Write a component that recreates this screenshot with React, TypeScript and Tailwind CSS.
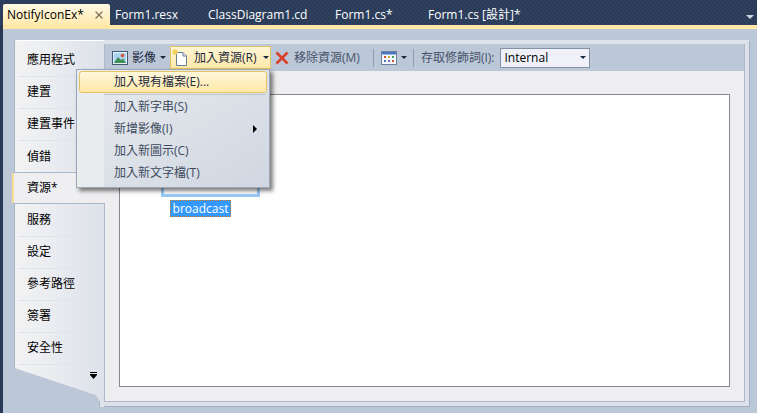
import React from 'react';
import { X } from 'lucide-react';

const CJK = "font-['Open_Sans','Noto_Sans_CJK_TC',sans-serif]";

const tabs = [
  { label: 'Form1.resx', w: 'w-[93px]' },
  { label: 'ClassDiagram1.cd', w: 'w-[127px]' },
  { label: 'Form1.cs*', w: 'w-[93px]' },
  { label: 'Form1.cs [設計]*', w: 'w-[130px]' },
];

const navItems = ['應用程式', '建置', '建置事件', '偵錯', '資源*', '服務', '設定', '參考路徑', '簽署', '安全性'];

function Caret({ className = '' }: { className?: string }) {
  return <span className={`inline-block w-0 h-0 border-x-[3px] border-x-transparent border-t-[3px] border-t-[#1b293e] ${className}`} />;
}

function ImageIcon() {
  return (
    <svg width="16" height="16" viewBox="0 0 16 16" className="shrink-0">
      <rect x="0.5" y="1.5" width="15" height="13" fill="#e6f2fa" stroke="#3f5a78" />
      <rect x="2" y="3" width="12" height="10" fill="#a9d3ee" />
      <path d="M2 13 L6 7 L9 10 L11 8.5 L14 13Z" fill="#3f8f52" />
      <circle cx="10.5" cy="5.5" r="1.8" fill="#d9553b" />
    </svg>
  );
}

function NewFileIcon() {
  return (
    <svg width="17" height="18" viewBox="0 0 17 18" className="shrink-0">
      <path d="M4.5 3.5 H11 L14.5 7 V16.5 H4.5Z" fill="#ffffff" stroke="#6b7d94" />
      <path d="M11 3.5 V7 H14.5" fill="#dfe7f0" stroke="#6b7d94" />
      <path d="M3 0 V6 M0 3 H6 M1 1 L5 5 M5 1 L1 5" stroke="#f2cf55" strokeWidth="1.1" />
    </svg>
  );
}

function RemoveIcon() {
  return (
    <svg width="14" height="14" viewBox="0 0 14 14" className="shrink-0">
      <path d="M1.5 1.5 L12.5 12.5 M12.5 1.5 L1.5 12.5" stroke="#d8402c" strokeWidth="2.6" />
    </svg>
  );
}

function GridIcon() {
  return (
    <svg width="16" height="14" viewBox="0 0 16 14" className="shrink-0">
      <rect x="0.5" y="0.5" width="15" height="13" fill="#f4f7fb" stroke="#6c7f9c" />
      <rect x="1" y="1" width="14" height="2.5" fill="#4a78c0" />
      <rect x="3" y="5" width="2" height="2" fill="#c9503e" />
      <rect x="7" y="5" width="2" height="2" fill="#e3a93c" />
      <rect x="11" y="5" width="2" height="2" fill="#4a9a55" />
      <rect x="3" y="9" width="2" height="2" fill="#4a78c0" />
      <rect x="7" y="9" width="2" height="2" fill="#8d5fb5" />
      <rect x="11" y="9" width="2" height="2" fill="#c9503e" />
    </svg>
  );
}

function NavList() {
  return (
    <div className="relative z-10 shrink-0 w-[92px] pl-[2px]">
      <div className="relative h-full pt-[4px] flex flex-col border-l border-l-[#a9b4c6] border-t border-t-white rounded-tl-[3px] bg-gradient-to-r from-[#f3f3f4] to-[#dde2ea] [clip-path:polygon(0_0,90px_0,90px_367px,85px_367px,85px_361px,81px_355px,0_328px)]">
        {navItems.map((item, i) => (
          <div
            key={item}
            className={
              item === '資源*'
                ? 'h-8'
                : `h-8 flex items-center pb-px pl-[9px] ml-[3px] mr-[9px] text-xs text-black ${i !== 3 ? 'border-b border-[#dfe3ea]' : ''}`
            }
          >
            {item === '資源*' ? '' : item}
          </div>
        ))}
        <div className="relative flex-1">
          <svg width="7" height="7" viewBox="0 0 7 7" className="absolute left-[75px] top-[7px]">
            <path d="M0 0 H7 V1 H0Z M0 2 H7 V3 H0Z M0 3 H7 L3.5 7Z" fill="#000000" />
          </svg>
        </div>
        <svg width="90" height="40" viewBox="0 0 90 40" className="absolute left-[-1px] top-[327px]">
          <path d="M0 1 L81 28 L85 34 V40" fill="none" stroke="#a9b4c6" strokeWidth="2" />
        </svg>
      </div>
      {/* selected page sticks out past the list on both sides */}
      <div className="absolute left-0 top-[132px] w-[93px] h-[32px] flex items-center pl-[13px] pb-px text-xs text-black bg-[#efeff1] border-y border-[#a9b6c8] border-l-2 border-l-[#f7dc98] rounded-l-[2px]">
        {navItems[4]}
      </div>
    </div>
  );
}

function Toolbar() {
  return (
    <div className="shrink-0 h-[27px] flex items-center pl-[7px] gap-[2px] bg-[#bcc7d8] text-xs text-[#1b293e]">
      <div className="flex items-center gap-[4px] h-[23px]">
        <ImageIcon />
        <span>影像</span>
        <Caret />
      </div>
      <div className="flex items-center h-[23px] w-[101px] ml-[2px] pl-[1px] bg-gradient-to-b from-[#fff6d6] to-[#ffe9a8] border border-[#e5c365]">
        <NewFileIcon />
        <span className="ml-[5px]">加入資源(R)</span>
        <Caret className="ml-[6px]" />
      </div>
      <div className="flex items-center gap-[5px] ml-[2px] h-[23px]">
        <RemoveIcon />
        <span className="text-[#45546a]">移除資源(M)</span>
      </div>
      <div className="w-px h-[18px] bg-[#8f9db2] ml-[11px] mr-[5px]" />
      <GridIcon />
      <Caret className="ml-[2px]" />
      <div className="w-px h-[18px] bg-[#8f9db2] ml-[4px] mr-[5px]" />
      <span className="text-[#45546a]">存取修飾詞(I):</span>
      <div className="ml-[4px] w-[90px] h-[20px] flex items-center justify-between px-[3px] bg-[#f0f1f8] border border-[#8492a6] text-black">
        <span>Internal</span>
        <Caret />
      </div>
    </div>
  );
}

function ResourceCanvas() {
  return (
    <div className="relative flex-1 mx-[14px] mt-[23px] mb-[14px] bg-white border border-[#88888e]">
      <div className="absolute left-[41px] top-[65px] w-[99px] h-[37px] border-x-[3px] border-b-[3px] border-[#99c9f5]" />
      <div className="absolute left-[50px] top-[105px] w-[61px] h-[17px] flex items-center justify-center bg-[#3399ff] border border-dotted border-[#d4792a] text-xs text-white">
        broadcast
      </div>
    </div>
  );
}

function AddMenu() {
  const rows = [
    { label: '加入新字串(S)' },
    { label: '新增影像(I)', sub: true },
    { label: '加入新圖示(C)' },
    { label: '加入新文字檔(T)' },
  ];
  return (
    <div className="absolute left-[76px] top-[69px] w-[194px] h-[119px] z-20 border border-[#9ba7b7] bg-gradient-to-br from-[#e9ecee] to-[#d0d7e2] shadow-[3px_3px_4px_rgba(0,0,0,0.5)] text-xs text-[#3c4a5e]">
      <div className="absolute left-0 top-0 bottom-0 w-[27px] bg-[#e9ecee]" />
      <div className="relative flex flex-col px-[2px] pt-[1px]">
        <div className="h-[22px] flex items-center pl-[34px] bg-gradient-to-b from-[#fff8dc] to-[#ffe8a6] border border-[#e5c365] rounded-[3px] text-[#1b293e]">
          加入現有檔案(E)...
        </div>
        <div className="h-px ml-[25px] mr-[1px] my-[1px] bg-[#bec6d3]" />
        <div>
          {rows.map((row) => (
            <div key={row.label} className="relative h-[22px] flex items-center pl-[35px]">
              {row.label}
              {row.sub && (
                <span className="absolute right-[10px] w-0 h-0 border-y-[4px] border-y-transparent border-l-[4px] border-l-black" />
              )}
            </div>
          ))}
        </div>
      </div>
    </div>
  );
}

export default function App() {
  return (
    <div className={`relative w-[757px] h-[413px] overflow-hidden flex flex-col bg-[#293955] ${CJK}`}>
      {/* document tabs */}
      <div className="shrink-0 h-[25px] flex items-end pl-[3px] bg-[repeating-conic-gradient(#2a3b58_0_25%,#30415f_0_50%)] bg-[length:4px_4px]">
        <div className="w-[107px] h-[21px] flex items-center justify-between pl-1 pr-[5px] bg-gradient-to-b from-[#fff9e4] to-[#ffe9ac] rounded-t-[2px] text-xs text-black">
          <span>NotifyIconEx*</span>
          <X className="w-3 h-3 text-[#7a725c]" strokeWidth={2.5} />
        </div>
        {tabs.map((tab) => (
          <div key={tab.label} className={`${tab.w} h-[21px] flex items-center pl-[5px] text-xs text-white`}>
            {tab.label}
          </div>
        ))}
        <div className="ml-auto mr-[3px] mb-[6px] w-0 h-0 border-x-[4px] border-x-transparent border-t-[4px] border-t-[#ced4df]" />
      </div>

      {/* page body */}
      <div className="flex-1 min-h-0 ml-[3px] flex flex-col bg-[#bcc7d8]">
        <div className="shrink-0 h-[4px] bg-[#ffe8a6]" />
        <div className="flex-1 min-h-0 flex pl-[9px] pt-[11px] pr-[7px] pb-[6px]">
          <NavList />
          <div className="flex-1 min-w-0 flex flex-col pt-[4px] pr-[4px] pb-[4px] bg-[#dde2ea] border-t border-t-[#dfe4ec] border-r border-b border-[#a3afc2]">
            <div className="flex-1 min-h-0 flex flex-col bg-[#eeeef0] border-l border-r border-b border-[#adb9ca] -mt-px">
              <Toolbar />
              <ResourceCanvas />
            </div>
          </div>
        </div>
      </div>

      <AddMenu />
    </div>
  );
}
